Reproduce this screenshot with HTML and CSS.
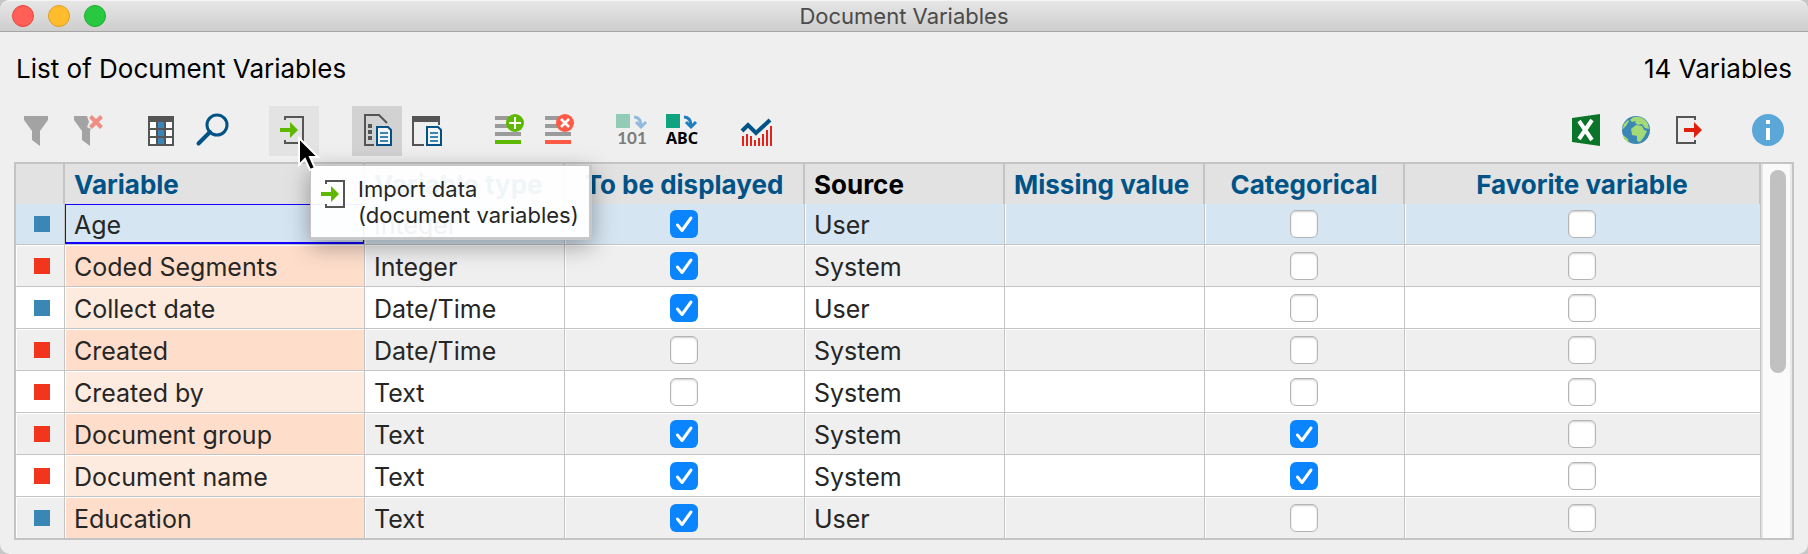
FILE: index.html
```html
<!DOCTYPE html>
<html lang="en">
<head>
    <meta charset="UTF-8">
    <meta name="viewport" content="width=device-width, initial-scale=1.0">
    <title>Document Variables</title>
    <link rel="stylesheet" href="styles.css">
</head>
<body>

    <div class="window">
        <header class="title-bar">
            <div class="window-buttons">
                <button class="dot close" aria-label="Close"></button>
                <button class="dot minimize" aria-label="Minimize"></button>
                <button class="dot zoom" aria-label="Zoom"></button>
            </div>
            <h1>Document Variables</h1>
        </header>

        <div class="list-header">
            <h2>List of Document Variables</h2>
            <span>14 Variables</span>
        </div>

        <div class="toolbar">
            <div class="group">
                <button class="tool" aria-label="Filter">
                    <svg viewBox="0 0 50 50"><path d="M12 10h24v4l-8 11v15l-8-6v-9l-8-11z" fill="#a3a3a3"/></svg>
                </button>
                <button class="tool" aria-label="Reset filter">
                    <svg viewBox="0 0 50 50">
                        <path d="M12 10h13l2 6-2 5 4 2-1 2v15l-8-6v-9l-8-11z" fill="#a3a3a3"/>
                        <path d="M28.500 10.500l11 11M39.500 10.500l-11 11" stroke="#f08d84" stroke-width="4"/>
                    </svg>
                </button>
            </div>
            <div class="group near">
                <button class="tool" aria-label="Select columns">
                    <svg viewBox="0 0 50 50">
                        <path d="M12 10h26v30H12z" fill="#555"/>
                        <path d="M14 16h6v6h-6zM30 16h6v6h-6zM14 24h6v6h-6zM30 24h6v6h-6zM14 32h6v6h-6zM30 32h6v6h-6z" fill="#fff"/>
                        <path d="M22 16h6v6h-6zM22 24h6v6h-6zM22 32h6v6h-6z" fill="#3a87b5"/>
                    </svg>
                </button>
                <button class="tool" aria-label="Search">
                    <svg viewBox="0 0 50 50" fill="none" stroke="#005387">
                        <circle cx="31" cy="19" r="10" stroke-width="3"/>
                        <path d="M24 26L12.500 37.500" stroke-width="4" stroke-linecap="round"/>
                    </svg>
                </button>
            </div>
            <div class="group far import">
                <button class="tool hover" aria-describedby="import-tip" aria-label="Import data">
                    <svg viewBox="0 0 50 50">
                        <path d="M16 14v-3h18v26H16v-3" fill="none" stroke="#555" stroke-width="2"/>
                        <path d="M11 22h10v-6l8 8-8 8v-6H11z" fill="#5fb800"/>
                    </svg>
                </button>
                <div class="tooltip" id="import-tip" role="tooltip">
                    <svg viewBox="0 0 28 30">
                        <path d="M5 4V1h18v26H5v-3" fill="none" stroke="#555" stroke-width="2"/>
                        <path d="M0 12h10V6l8 8-8 8v-6H0z" fill="#5fb800"/>
                    </svg>
                    <p>Import data<br>(document variables)</p>
                </div>
                <svg class="cursor" viewBox="0 0 24 36">
                    <path d="M2 2v27l6-6 5 11 5-2-5-11h8z" fill="#000" stroke="#fff" stroke-width="2"/>
                </svg>
            </div>
            <div class="group far">
                <button class="tool active" aria-pressed="true" aria-label="Variable list">
                    <svg viewBox="0 0 50 50">
                        <path d="M22 39h-9V9h14l8 8" fill="none" stroke="#555" stroke-width="2"/>
                        <path d="M16 18h4v4h-4zM16 24h4v4h-4zM16 30h4v4h-4z" fill="#555"/>
                        <path d="M25 21h11l3 3v15H25z" fill="#f4f4f4" stroke="#005387" stroke-width="2"/>
                        <path d="M28 27h8M28 31h8M28 35h8" stroke="#3a87b5" stroke-width="2"/>
                    </svg>
                </button>
                <button class="tool" aria-label="Data editor">
                    <svg viewBox="0 0 50 50">
                        <path d="M10 10h28v9h-2v-3H12v22h10v2H10z" fill="#555"/>
                        <path d="M25 21h11l3 3v15H25z" fill="#f4f4f4" stroke="#005387" stroke-width="2"/>
                        <path d="M28 27h8M28 31h8M28 35h8" stroke="#3a87b5" stroke-width="2"/>
                    </svg>
                </button>
            </div>
            <div class="group far">
                <button class="tool" aria-label="New variable">
                    <svg viewBox="0 0 50 50">
                        <path d="M10 12h16M10 20h16M10 28h26" stroke="#9b9b9b" stroke-width="4"/>
                        <path d="M10 36h26" stroke="#5fb800" stroke-width="4"/>
                        <circle cx="30" cy="17" r="9" fill="#5fb800"/>
                        <path d="M30 11v12M24 17h12" stroke="#fff" stroke-width="2"/>
                    </svg>
                </button>
                <button class="tool" aria-label="Delete variable">
                    <svg viewBox="0 0 50 50">
                        <path d="M10 12h16M10 20h16M10 28h26" stroke="#9b9b9b" stroke-width="4"/>
                        <path d="M10 36h26" stroke="#ff5a46" stroke-width="4"/>
                        <circle cx="30" cy="17" r="9" fill="#ff5a46"/>
                        <path d="M26 13l8 8M34 13l-8 8" stroke="#fff" stroke-width="2.500"/>
                    </svg>
                </button>
            </div>
            <div class="group near">
                <button class="tool" aria-label="Transform into number">
                    <svg viewBox="0 0 50 50">
                        <path d="M7 8h14v14H7z" fill="#92ccb7"/>
                        <path d="M25 11q7 0 7 9M27 16l5 5 5-5" fill="none" stroke="#8fbade" stroke-width="3"/>
                        <text x="23" y="38" text-anchor="middle" fill="#7b7b7b" class="icon-text digits">101</text>
                    </svg>
                </button>
                <button class="tool" aria-label="Transform into text">
                    <svg viewBox="0 0 50 50">
                        <path d="M7 8h14v14H7z" fill="#10a37f"/>
                        <path d="M25 11q7 0 7 9M27 16l5 5 5-5" fill="none" stroke="#1e7ec2" stroke-width="3"/>
                        <text x="23" y="38" text-anchor="middle" fill="#000" class="icon-text">ABC</text>
                    </svg>
                </button>
            </div>
            <div class="group near">
                <button class="tool" aria-label="Statistics">
                    <svg viewBox="0 0 50 50">
                        <path d="M10 30v10M14 28v12M18 30v10M22 34v6M26 32v8M30 28v12M34 24v16M38 20v20" stroke="#e2231a" stroke-width="2"/>
                        <path d="M9 25l6-6 8 8 14-13" fill="none" stroke="#005387" stroke-width="4"/>
                    </svg>
                </button>
            </div>
            <div class="group right">
                <button class="tool" aria-label="Excel export">
                    <svg viewBox="0 0 50 50">
                        <path d="M12 12l28-4v32l-28-4z" fill="#0a7529"/>
                        <path d="M19 15l13 19M32 14L19 33" stroke="#fff" stroke-width="4"/>
                    </svg>
                </button>
                <button class="tool" aria-label="Web view">
                    <svg viewBox="0 0 50 50">
                        <circle cx="26" cy="24" r="14" fill="#3a87b5"/>
                        <path d="M22 12c6-3 13 0 16 6l1 5-4-1-3-4-4 1-3-2 1-2-4 1-2-2zM21 23l5-4 6 1 2 4 3 1-3 6-4 5-3-1v-5l-5-1zM12 24l4-4 3-5-1-1-4 4zM13 29l5 4 1 4-5-4z" fill="#a3d977"/>
                    </svg>
                </button>
                <button class="tool" aria-label="Export data">
                    <svg viewBox="0 0 50 50">
                        <path d="M35 14v-3H17v26h18v-3" fill="none" stroke="#555" stroke-width="2"/>
                        <path d="M24 22h10v-6l8 8-8 8v-6H24z" fill="#e0200f"/>
                    </svg>
                </button>
            </div>
            <div class="group far">
                <button class="tool" aria-label="Help">
                    <svg viewBox="0 0 50 50">
                        <circle cx="25" cy="24" r="16" fill="#5aa7d8"/>
                        <path d="M23 14h4v4h-4zM23 22h4v12h-4z" fill="#fff"/>
                    </svg>
                </button>
            </div>
        </div>

        <main class="grid-box">
            <table>
                <colgroup>
                    <col class="col-mark">
                    <col class="col-variable">
                    <col class="col-medium">
                    <col class="col-display">
                    <col class="col-medium">
                    <col class="col-medium">
                    <col class="col-medium">
                    <col>
                </colgroup>
                <thead>
                    <tr>
                        <th></th>
                        <th>Variable</th>
                        <th>Variable type</th>
                        <th class="center">To be displayed</th>
                        <th class="plain">Source</th>
                        <th>Missing value</th>
                        <th class="center">Categorical</th>
                        <th class="center">Favorite variable</th>
                    </tr>
                </thead>
                <tbody>
                    <tr class="selected">
                        <td><span class="mark user"></span></td>
                        <td class="name">Age</td>
                        <td>Integer</td>
                        <td class="center"><input type="checkbox" aria-label="Display Age" checked></td>
                        <td>User</td>
                        <td></td>
                        <td class="center"><input type="checkbox" aria-label="Age is categorical"></td>
                        <td class="center"><input type="checkbox" aria-label="Age is favorite"></td>
                    </tr>
                    <tr>
                        <td><span class="mark system"></span></td>
                        <td class="name">Coded Segments</td>
                        <td>Integer</td>
                        <td class="center"><input type="checkbox" aria-label="Display Coded Segments" checked></td>
                        <td>System</td>
                        <td></td>
                        <td class="center"><input type="checkbox" aria-label="Coded Segments is categorical"></td>
                        <td class="center"><input type="checkbox" aria-label="Coded Segments is favorite"></td>
                    </tr>
                    <tr>
                        <td><span class="mark user"></span></td>
                        <td class="name">Collect date</td>
                        <td>Date/Time</td>
                        <td class="center"><input type="checkbox" aria-label="Display Collect date" checked></td>
                        <td>User</td>
                        <td></td>
                        <td class="center"><input type="checkbox" aria-label="Collect date is categorical"></td>
                        <td class="center"><input type="checkbox" aria-label="Collect date is favorite"></td>
                    </tr>
                    <tr>
                        <td><span class="mark system"></span></td>
                        <td class="name">Created</td>
                        <td>Date/Time</td>
                        <td class="center"><input type="checkbox" aria-label="Display Created"></td>
                        <td>System</td>
                        <td></td>
                        <td class="center"><input type="checkbox" aria-label="Created is categorical"></td>
                        <td class="center"><input type="checkbox" aria-label="Created is favorite"></td>
                    </tr>
                    <tr>
                        <td><span class="mark system"></span></td>
                        <td class="name">Created by</td>
                        <td>Text</td>
                        <td class="center"><input type="checkbox" aria-label="Display Created by"></td>
                        <td>System</td>
                        <td></td>
                        <td class="center"><input type="checkbox" aria-label="Created by is categorical"></td>
                        <td class="center"><input type="checkbox" aria-label="Created by is favorite"></td>
                    </tr>
                    <tr>
                        <td><span class="mark system"></span></td>
                        <td class="name">Document group</td>
                        <td>Text</td>
                        <td class="center"><input type="checkbox" aria-label="Display Document group" checked></td>
                        <td>System</td>
                        <td></td>
                        <td class="center"><input type="checkbox" aria-label="Document group is categorical" checked></td>
                        <td class="center"><input type="checkbox" aria-label="Document group is favorite"></td>
                    </tr>
                    <tr>
                        <td><span class="mark system"></span></td>
                        <td class="name">Document name</td>
                        <td>Text</td>
                        <td class="center"><input type="checkbox" aria-label="Display Document name" checked></td>
                        <td>System</td>
                        <td></td>
                        <td class="center"><input type="checkbox" aria-label="Document name is categorical" checked></td>
                        <td class="center"><input type="checkbox" aria-label="Document name is favorite"></td>
                    </tr>
                    <tr>
                        <td><span class="mark user"></span></td>
                        <td class="name">Education</td>
                        <td>Text</td>
                        <td class="center"><input type="checkbox" aria-label="Display Education" checked></td>
                        <td>User</td>
                        <td></td>
                        <td class="center"><input type="checkbox" aria-label="Education is categorical"></td>
                        <td class="center"><input type="checkbox" aria-label="Education is favorite"></td>
                    </tr>
                </tbody>
            </table>
            <div class="scrollbar">
                <div class="thumb"></div>
            </div>
        </main>
    </div>

</body>
</html>
```

FILE: styles.css
```css
* {
    box-sizing: border-box;
}

body {
    font-family: Inter, 'Liberation Sans', sans-serif;
    margin: 0;
    background-color: #c8c8c8;
    color: #262626;
}

.window {
    min-height: 100vh;
    background-color: #efefef;
    border-radius: 10px;
    padding-bottom: 14px;
}

/* Title bar */
.title-bar {
    display: grid;
    grid-template-columns: 1fr auto 1fr;
    align-items: center;
    height: 32px;
    padding: 0 12px;
    background: linear-gradient(#e6e6e6, #cecece);
    border-top: 1px solid #f4f4f4;
    border-bottom: 1px solid #a5a5a5;
    border-radius: 10px 10px 0 0;
}

.title-bar h1 {
    margin: 0;
    font-size: 22px;
    font-weight: 400;
    line-height: 30px;
    color: #4a4a4a;
}

.window-buttons {
    display: flex;
    gap: 14px;
}

.dot {
    width: 22px;
    height: 22px;
    padding: 0;
    border: 1px solid;
    border-radius: 50%;
}

.close {
    background-color: #ff5f57;
    border-color: #e2463f;
}

.minimize {
    background-color: #ffbd2e;
    border-color: #e09e22;
}

.zoom {
    background-color: #28c940;
    border-color: #1dab2c;
}

.list-header {
    display: flex;
    justify-content: space-between;
    align-items: center;
    height: 74px;
    padding: 0 16px 2px;
    font-size: 26px;
    color: #000;
}

.list-header h2 {
    margin: 0;
    font-size: 26px;
    font-weight: 400;
}

/* Toolbar */
.toolbar {
    display: flex;
    height: 50px;
    margin-bottom: 6px;
    padding: 0 15px 0 12px;
}

.group {
    display: flex;
    position: relative;
}

.near {
    margin-left: 24px;
}

.far {
    margin-left: 33px;
}

.right {
    margin-left: auto;
}

.tool {
    width: 50px;
    height: 50px;
    padding: 0;
    border: none;
    background: none;
}

.tool svg {
    display: block;
    width: 50px;
    height: 50px;
}

.tool.hover {
    background-color: #e3e3e3;
}

.tool.active {
    background-color: #d2d2d2;
}

.icon-text {
    font-family: 'Noto Sans', sans-serif;
    font-size: 16px;
    font-weight: 700;
}

.icon-text.digits {
    font-family: Lato, sans-serif;
    font-size: 17px;
}

/* Tooltip and pointer over the table */
.tooltip {
    position: absolute;
    top: 59px;
    left: 41px;
    z-index: 2;
    display: flex;
    gap: 9px;
    width: 282px;
    height: 75px;
    padding: 14px 0 0 10px;
    background-color: rgba(255, 255, 255, 0.94);
    border: 1px solid #c4c4c4;
    border-right: 3px solid #c8c8c8;
    border-bottom: 3px solid #c8c8c8;
    box-shadow: 0 6px 22px rgba(0, 0, 0, 0.35);
}

.tooltip svg {
    flex: none;
    width: 28px;
    height: 30px;
}

.tooltip p {
    margin: -4px 0 0;
    font-size: 22px;
    line-height: 26px;
    white-space: nowrap;
}

.cursor {
    position: absolute;
    top: 30px;
    left: 28px;
    z-index: 3;
    width: 24px;
    height: 36px;
}

/* Variable table */
.grid-box {
    display: flex;
    margin: 0 14px;
    border: 2px solid #c4c4c4;
}

table {
    flex: 1;
    width: 0;
    table-layout: fixed;
    border-collapse: separate;
    border-spacing: 0;
    font-size: 25px;
    line-height: 30px;
}

.col-mark {
    width: 49px;
}

.col-variable {
    width: 300px;
}

.col-medium {
    width: 200px;
}

.col-display {
    width: 240px;
}

th {
    height: 40px;
    padding: 2px 8px 0 9px;
    background-color: #e2e2e2;
    border-right: 2px solid #c4c4c4;
    font-size: 26px;
    font-weight: 700;
    color: #005387;
    text-align: left;
    white-space: nowrap;
}

th.plain {
    color: #000;
}

td {
    height: 42px;
    padding: 2px 9px 0;
    background-color: #fff;
    border-right: 1px solid #c4c4c4;
    border-bottom: 1px solid #c4c4c4;
    box-shadow: inset 1px 1px #fff;
    white-space: nowrap;
}

th.center {
    padding: 2px 0 0;
    text-align: center;
}

td.center {
    padding: 0 2px 0 0;
}

td:first-child {
    padding: 0 0 0 18px;
}

tr:nth-child(even) td {
    background-color: #efefef;
}

td.name {
    background-color: #feebdf;
}

tr:nth-child(even) td.name {
    background-color: #fedecb;
}

tr.selected td {
    height: 41px;
    background-color: #d6e5f2;
    box-shadow: inset 1px 0 #fff;
}

tr.selected td:first-child {
    box-shadow: none;
}

tr.selected td.name {
    background-color: #d6e5f2;
    box-shadow: inset 0 0 0 1px #1400ff, inset 0 -2px #1400ff;
}

tbody tr:last-child td {
    height: 41px;
    border-bottom: none;
}

.mark {
    display: block;
    width: 16px;
    height: 16px;
}

.mark.user {
    background-color: #3a87b5;
}

.mark.system {
    background-color: #f1361d;
}

input[type="checkbox"] {
    appearance: none;
    display: block;
    width: 28px;
    height: 28px;
    margin: 0 auto;
    background-color: #fff;
    border: 1px solid #b4b4b4;
    border-radius: 6px;
    box-shadow: inset 0 1px 2px rgba(0, 0, 0, 0.2);
}

input[type="checkbox"]:checked {
    background: #0a84ff url("data:image/svg+xml,%3Csvg xmlns='http://www.w3.org/2000/svg' viewBox='0 0 28 28'%3E%3Cpath d='M7.500 15l4.500 5.500L21 8' fill='none' stroke='%23fff' stroke-width='3' stroke-linecap='round' stroke-linejoin='round'/%3E%3C/svg%3E") center / 28px 28px;
    border: none;
    box-shadow: none;
}

.scrollbar {
    width: 31px;
    padding: 6px 4px 0 7px;
    background-color: #fafafa;
    border-left: 2px solid #e4e4e4;
    border-right: 2px solid #e9e9e9;
}

.thumb {
    width: 16px;
    height: 203px;
    background-color: #c1c1c1;
    border-radius: 8px;
}
```
